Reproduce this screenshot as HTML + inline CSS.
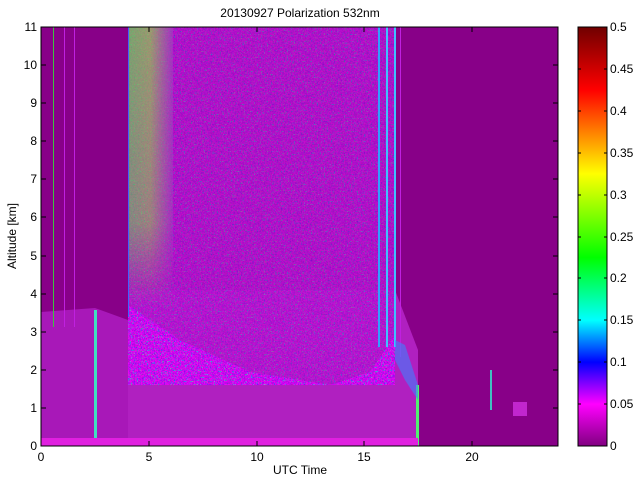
<!DOCTYPE html>
<html><head><meta charset="utf-8"><style>
html,body{margin:0;padding:0;background:#fff;width:640px;height:480px;overflow:hidden}
svg{display:block;font-family:"Liberation Sans",sans-serif}
</style></head><body>
<svg width="640" height="480" viewBox="0 0 640 480">
<defs>
<filter id="n1" x="0" y="0" width="100%" height="100%">
<feTurbulence type="fractalNoise" baseFrequency="0.7" numOctaves="1" seed="3"/>
<feColorMatrix type="matrix" values="2.2 -1.2 0 0 0.1  -1.5 2.2 -0.5 0 -0.35  0.5 -0.8 2 0 0.2  0 0 0 0 1"/>
</filter>
<filter id="n2" x="0" y="0" width="100%" height="100%">
<feTurbulence type="fractalNoise" baseFrequency="0.6" numOctaves="1" seed="9"/>
<feColorMatrix type="matrix" values="0.8 1.2 -0.8 0 -0.2  -1 3 -1 0 -0.2  -1 -0.5 1 0 0  0 0 0 0 1"/>
</filter>
<linearGradient id="cb" x1="0" y1="1" x2="0" y2="0">
<stop offset="0" stop-color="#800080"/>
<stop offset="0.1" stop-color="#ff00ff"/>
<stop offset="0.2" stop-color="#0000ff"/>
<stop offset="0.3" stop-color="#00ffff"/>
<stop offset="0.45" stop-color="#00ff00"/>
<stop offset="0.65" stop-color="#ffff00"/>
<stop offset="0.85" stop-color="#ff0000"/>
<stop offset="1" stop-color="#700000"/>
</linearGradient>
<linearGradient id="gb" x1="0" y1="0" x2="1" y2="0">
<stop offset="0" stop-color="#60f040"/>
<stop offset="0.5" stop-color="#90e040"/>
<stop offset="1" stop-color="#a040c0"/>
</linearGradient>
<linearGradient id="gv" x1="0" y1="0" x2="0" y2="1">
<stop offset="0" stop-color="#fff" stop-opacity="1"/>
<stop offset="0.7" stop-color="#fff" stop-opacity="0.8"/>
<stop offset="1" stop-color="#fff" stop-opacity="0"/>
</linearGradient>
<mask id="gm"><rect x="128" y="27" width="45" height="280" fill="url(#gv)"/></mask>
<clipPath id="pc"><rect x="41" y="27" width="517" height="419"/></clipPath>
</defs>
<g clip-path="url(#pc)">
<rect x="41" y="27" width="517" height="419" fill="#880088"/>
<path d="M41 312 L95 308 L128 320 L128 446 L41 446Z" fill="#a818b8"/>
<path d="M128 290 L395 290 L418 350 L418 446 L128 446Z" fill="#b020c0"/>
<g opacity="0.8">
<path d="M128 27 L395 27 L395 335 L370 372 L330 385 L250 372 L180 340 L128 305Z" filter="url(#n1)" fill="#fff"/>
</g>
<path d="M128 27 L395 27 L395 335 L370 372 L330 385 L250 372 L180 340 L128 305Z" fill="#9a20a8" opacity="0.45"/>
<rect x="128" y="27" width="45" height="280" fill="url(#gb)" opacity="0.65" mask="url(#gm)"/>
<rect x="53" y="27" width="1" height="300" fill="#40c040"/>
<rect x="64" y="27" width="1" height="300" fill="#c020e0"/>
<rect x="74" y="27" width="1" height="300" fill="#c020e0"/>
<rect x="128" y="27" width="1" height="290" fill="#4060ff"/>
<rect x="94" y="310" width="3" height="136" fill="#40e0c0"/>
<rect x="378" y="27" width="2" height="320" fill="#30a0ff"/>
<rect x="386" y="27" width="2" height="320" fill="#40c0ff"/>
<rect x="394" y="27" width="2" height="320" fill="#40c0ff"/>
<rect x="400" y="27" width="1" height="330" fill="#c020e0"/>
<rect x="416" y="385" width="3" height="61" fill="#50f070"/>
<rect x="490" y="370" width="2" height="40" fill="#40c0c0"/>
<path d="M395 340 L405 345 L418 385 L418 400 L405 380 L395 360Z" fill="#4080ff" opacity="0.6"/>
<rect x="513" y="402" width="14" height="14" fill="#d030e0" opacity="0.8"/>
<rect x="41" y="438" width="377" height="8" fill="#e020e0"/>
</g>
<rect x="41" y="27" width="517" height="419" fill="none" stroke="#000" stroke-width="1"/>
<g stroke="#000" stroke-width="1">
<path d="M41 446h5M41 408h5M41 370h5M41 332h5M41 294h5M41 256h5M41 217h5M41 179h5M41 141h5M41 103h5M41 65h5M41 27h5"/>
<path d="M558 446h-5M558 408h-5M558 370h-5M558 332h-5M558 294h-5M558 256h-5M558 217h-5M558 179h-5M558 141h-5M558 103h-5M558 65h-5M558 27h-5"/>
<path d="M149 446v-5M257 446v-5M364 446v-5M472 446v-5M149 27v5M257 27v5M364 27v5M472 27v5"/>
</g>
<g font-size="12" fill="#000" text-anchor="end">
<text x="37" y="450">0</text><text x="37" y="412">1</text><text x="37" y="374">2</text><text x="37" y="336">3</text>
<text x="37" y="298">4</text><text x="37" y="260">5</text><text x="37" y="221">6</text><text x="37" y="183">7</text>
<text x="37" y="145">8</text><text x="37" y="107">9</text><text x="37" y="69">10</text><text x="37" y="31">11</text>
</g>
<g font-size="12" fill="#000" text-anchor="middle">
<text x="41" y="461">0</text><text x="149" y="461">5</text><text x="257" y="461">10</text><text x="364" y="461">15</text><text x="472" y="461">20</text>
<text x="300" y="474">UTC Time</text>
<text x="300" y="17">20130927 Polarization 532nm</text>
<text transform="translate(16 236) rotate(-90)">Altitude [km]</text>
</g>
<rect x="578" y="27" width="29" height="419" fill="url(#cb)" stroke="#000"/>
<g stroke="#000"><path d="M578 404h3M578 362h3M578 320h3M578 278h3M578 237h3M578 195h3M578 153h3M578 111h3M578 69h3M607 404h-3M607 362h-3M607 320h-3M607 278h-3M607 237h-3M607 195h-3M607 153h-3M607 111h-3M607 69h-3"/></g>
<g font-size="12" fill="#000">
<text x="610" y="450">0</text><text x="610" y="408">0.05</text><text x="610" y="366">0.1</text><text x="610" y="324">0.15</text>
<text x="610" y="282">0.2</text><text x="610" y="241">0.25</text><text x="610" y="199">0.3</text><text x="610" y="157">0.35</text>
<text x="610" y="115">0.4</text><text x="610" y="73">0.45</text><text x="610" y="31">0.5</text>
</g>
</svg>
</body></html>
